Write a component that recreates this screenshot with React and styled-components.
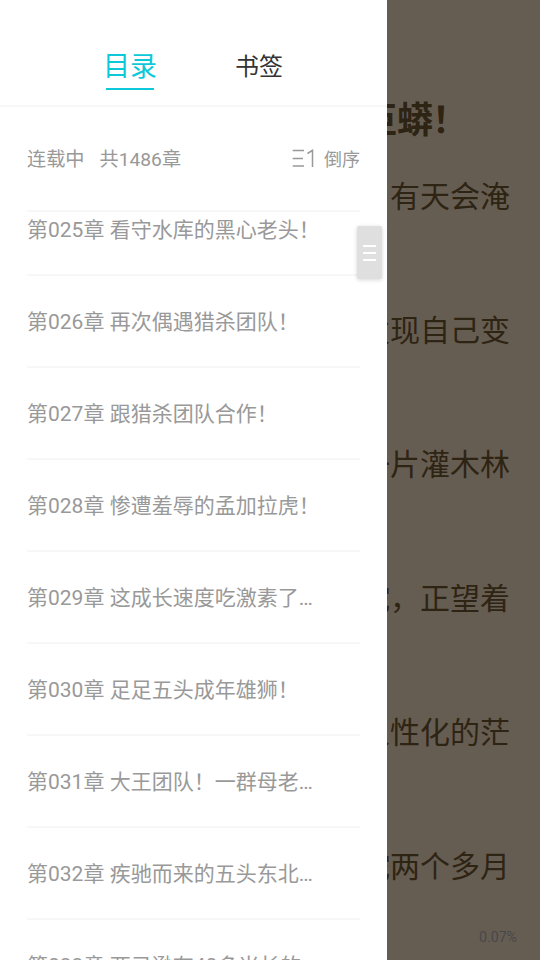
import React from "react";
import styled, { createGlobalStyle } from "styled-components";

const chapters = [
  { id: "025", title: "看守水库的黑心老头！" },
  { id: "026", title: "再次偶遇猎杀团队！" },
  { id: "027", title: "跟猎杀团队合作！" },
  { id: "028", title: "惨遭羞辱的孟加拉虎！" },
  { id: "029", title: "这成长速度吃激素了…" },
  { id: "030", title: "足足五头成年雄狮！" },
  { id: "031", title: "大王团队！一群母老…" },
  { id: "032", title: "疾驰而来的五头东北…" },
  { id: "033", title: "两己逊有40多米长的…" },
];

const lines = [
  "有天会淹",
  "发现自己变",
  "一片灌木林",
  "蛇，正望着",
  "人性化的茫",
  "蛇两个多月",
];

const GlobalStyle = createGlobalStyle`
  * {
    box-sizing: border-box;
  }

  body {
    margin: 0;
    font-family: Roboto, "Noto Sans CJK SC", sans-serif;
  }
`;

const Screen = styled.div`
  width: 540px;
  height: 960px;
  position: relative;
  overflow: hidden;
  background: #665d52;
`;

const Reader = styled.main`
  display: flex;
  flex-direction: column;
  align-items: flex-end;
  height: 100%;
  padding: 94px 30px 0 0;
  color: #2e2413;
`;

const ReaderTitle = styled.h1`
  margin: 0 43px 0 0;
  height: 54px;
  font-size: 36px;
  line-height: 54px;
  font-weight: 700;
  letter-spacing: -1px;
  white-space: nowrap;
`;

const ReaderLine = styled.p`
  margin: 0;
  height: 134px;
  padding-top: 25px;
  font-size: 30px;
  line-height: 48px;
  white-space: nowrap;
`;

const Progress = styled.span`
  margin: -25px -7px 0 0;
  font-size: 14.2px;
  line-height: 20px;
  color: #48474a;
`;

const Drawer = styled.aside`
  position: absolute;
  top: 0;
  left: 0;
  width: 387px;
  height: 960px;
  display: flex;
  flex-direction: column;
  background: #fff;
`;

const Tabs = styled.nav`
  display: flex;
  height: 107px;
  flex-shrink: 0;
  padding: 47px 0 0 103px;
  border-bottom: 2px solid #f7f7f7;
`;

const Tab = styled.div`
  width: ${(props) => (props.$active ? "54px" : "48px")};
  height: 43px;
  margin-right: 78px;
  display: flex;
  flex-direction: column;
  align-items: center;
  font-size: ${(props) => (props.$active ? "27px" : "24px")};
  line-height: 40px;
  color: ${(props) => (props.$active ? "#0cc8d8" : "#333")};
  white-space: nowrap;

  &::after {
    content: "";
    width: 48px;
    height: 2px;
    margin-top: 1px;
    flex-shrink: 0;
    background: ${(props) => (props.$active ? "#0cc8d8" : "transparent")};
  }
`;

const Summary = styled.div`
  display: flex;
  align-items: center;
  height: 105px;
  flex-shrink: 0;
  margin: 0 27px;
  padding-bottom: 1px;
  border-bottom: 2px solid #f7f7f7;
  font-size: 19.2px;
  color: #999;
`;

const Count = styled.span`
  margin-left: 15px;
`;

const Order = styled.div`
  display: flex;
  align-items: center;
  gap: 10px;
  margin-left: auto;
  font-size: 18px;
`;

const List = styled.div`
  flex: 1;
  min-height: 0;
  overflow: hidden;
  padding: 0 27px;
`;

const Chapter = styled.div`
  height: 92px;
  padding-top: 30px;
  border-bottom: 2px solid #f7f7f7;
  font-size: 21px;
  line-height: 32px;
  color: #999;
  white-space: nowrap;

  &:first-child {
    margin-top: -28px;
  }
`;

const ScrollHandle = styled.div`
  position: absolute;
  top: 226px;
  right: 5px;
  width: 25px;
  height: 53px;
  display: flex;
  flex-direction: column;
  align-items: center;
  justify-content: center;
  gap: 5px;
  border-radius: 2px;
  background: #dfdfdf;
  box-shadow: 0 1px 4px rgba(0, 0, 0, 0.16);
`;

const Grip = styled.span`
  width: 13px;
  height: 2px;
  background: #fff;
`;

const OrderIcon = () => (
  <svg width="22" height="18" viewBox="0 0 22 18" fill="none" stroke="#999" strokeWidth="1.5">
    <path d="M.7 1.5h11.3M.7 9.5h10.3M.7 17h11.3M15.5 4.5l5-3.2V18" />
  </svg>
);

const App = () => {
  return (
    <Screen>
      <GlobalStyle />
      <Reader>
        <ReaderTitle>巨蟒！</ReaderTitle>
        {lines.map((line) => (
          <ReaderLine key={line}>{line}</ReaderLine>
        ))}
        <Progress>0.07%</Progress>
      </Reader>
      <Drawer>
        <Tabs>
          <Tab $active>目录</Tab>
          <Tab>书签</Tab>
        </Tabs>
        <Summary>
          <span>连载中</span>
          <Count>共1486章</Count>
          <Order>
            <OrderIcon />
            倒序
          </Order>
        </Summary>
        <List>
          {chapters.map((chapter) => (
            <Chapter key={chapter.id}>
              第{chapter.id}章 {chapter.title}
            </Chapter>
          ))}
        </List>
        <ScrollHandle>
          <Grip />
          <Grip />
          <Grip />
        </ScrollHandle>
      </Drawer>
    </Screen>
  );
};

export default App;
